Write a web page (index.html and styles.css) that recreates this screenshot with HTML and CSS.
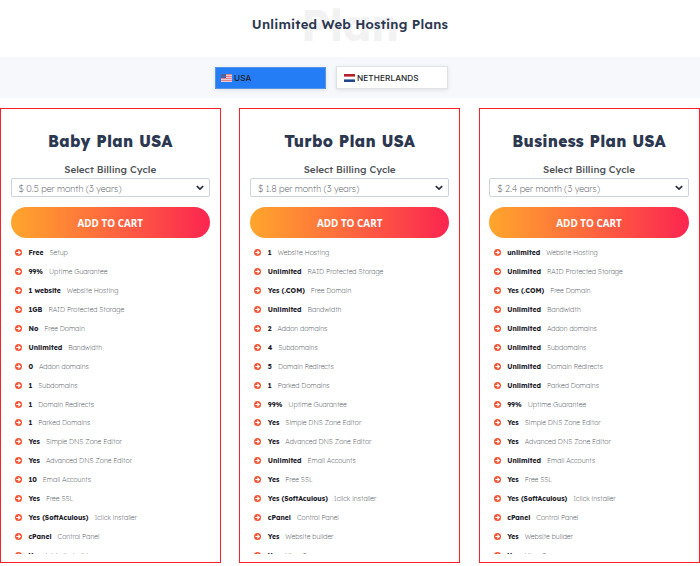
FILE: index.html
```html
<!DOCTYPE html>
<html lang="en">

<head>
  <title>Unlimited Web Hosting Plans</title>
  <meta charset="UTF-8">
  <link rel="stylesheet" href="styles.css">
</head>

<body>
  <header class="heading">
    <span class="heading-shadow">Plan</span>
    <h1>Unlimited Web Hosting Plans</h1>
  </header>

  <nav class="locations">
    <a class="location active">
      <svg class="flag" viewBox="0 0 11 8">
        <rect width="11" height="8" fill="#e9cbd8"/>
        <path d="M0 .5h11M0 2.5h11M0 4.5h11M0 6.5h11" stroke="#e27f8c"/>
        <rect width="5" height="4" fill="#55619b"/>
      </svg>
      <span>USA</span>
    </a>
    <a class="location">
      <svg class="flag" viewBox="0 0 11 8">
        <rect width="11" height="8" fill="#fff"/>
        <rect width="11" height="2.6" fill="#b51f2e"/>
        <rect y="5.4" width="11" height="2.6" fill="#21468b"/>
      </svg>
      <span>NETHERLANDS</span>
    </a>
  </nav>

  <main class="plans" id="plans"></main>

  <script src="plans.js"></script>
</body>

</html>
```
FILE: styles.css
```css
* {
  box-sizing: border-box;
  margin: 0;
  padding: 0;
}

body {
  width: 700px;
  height: 566px;
  overflow: hidden;
  background: #fff;
  font-family: Lexend, Inter, sans-serif;
  color: #2c3850;
}

.heading {
  position: relative;
  height: 57px;
  padding-top: 15px;
  text-align: center;
}

.heading h1 {
  position: relative;
  font-size: 13.1px;
  line-height: 18px;
  font-weight: 600;
  letter-spacing: 0.22px;
}

.heading-shadow {
  position: absolute;
  top: 0;
  left: 0;
  width: 100%;
  font-size: 43.5px;
  line-height: 50px;
  font-weight: 700;
  color: #f2f2f3;
}

.locations {
  display: flex;
  gap: 10px;
  height: 41px;
  padding: 9px 0 0 215px;
  background: #f7f8fb;
}

.location {
  display: flex;
  align-items: center;
  gap: 2px;
  width: 112px;
  height: 23px;
  padding: 1px 0 0 7px;
  background: #fff;
  border: 1px solid #dfe3e8;
  box-shadow: 0 1px 4px rgba(0, 0, 0, 0.1);
  font-family: Inter, sans-serif;
  font-size: 8.2px;
  font-weight: 500;
  letter-spacing: 0.1px;
  color: #1b1e24;
}

.location.active {
  width: 111px;
  margin-top: 1px;
  height: 22px;
  padding: 0 0 0 5px;
  background: #247df5;
  border-color: #5596e6;
}

.flag {
  width: 11px;
  height: 8px;
}

.plans {
  display: grid;
  grid-template-columns: repeat(3, 221px);
  column-gap: 18.4px;
  margin-top: 10px;
}

.plan {
  height: 455px;
  padding: 22px 10px 9px 9.5px;
  border: 1px solid #fb1f26;
  text-align: center;
}

.plan h2 {
  font-size: 15.6px;
  line-height: 20px;
  font-weight: 800;
  letter-spacing: 0.28px;
}

.plan h3 {
  margin-top: 11px;
  font-size: 9.9px;
  line-height: 14px;
  font-weight: 500;
  color: #505459;
}

.cycle {
  display: flex;
  align-items: center;
  justify-content: space-between;
  height: 19px;
  margin-top: 2px;
  padding: 1px 5px 0 7px;
  border: 1px solid #cdd4dc;
  border-radius: 2px;
  font-size: 8.9px;
  font-weight: 200;
  color: #5c626b;
}

.cycle svg {
  width: 8px;
  height: 6px;
}

.cart {
  display: block;
  width: 100%;
  height: 31px;
  margin-top: 10px;
  border: 0;
  border-radius: 16px;
  background: linear-gradient(90deg, #ffa62c, #fe6a3e 48%, #fb2550);
  font-family: "Open Sans", sans-serif;
  font-size: 9.9px;
  font-weight: 700;
  color: #fff;
}

.features {
  height: 316px;
  padding-top: 5.5px;
  overflow: hidden;
  list-style: none;
  text-align: left;
}

.features li {
  display: flex;
  align-items: center;
  height: 18.9px;
  padding-left: 4.5px;
  font-size: 6.85px;
  white-space: nowrap;
}

.features svg {
  flex: none;
  width: 7px;
  height: 7px;
  margin-right: 6.4px;
}

.features b {
  margin-right: 6px;
  font-weight: 700;
  color: #1b2029;
}

.features span {
  font-weight: 200;
  color: #565b63;
}
```
FILE: plans.js
```js
const plans = [
  {
    name: 'Baby Plan USA', price: '0.5', features: [
      ['Free', 'Setup'], ['99%', 'Uptime Guarantee'], ['1 website', 'Website Hosting'],
      ['1GB', 'RAID Protected Storage'], ['No', 'Free Domain'], ['Unlimited', 'Bandwidth'],
      ['0', 'Addon domains'], ['1', 'Subdomains'], ['1', 'Domain Redirects'],
      ['1', 'Parked Domains'], ['Yes', 'Simple DNS Zone Editor'], ['Yes', 'Advanced DNS Zone Editor'],
      ['10', 'Email Accounts'], ['Yes', 'Free SSL'], ['Yes (SoftAculous)', '1click installer'],
      ['cPanel', 'Control Panel'], ['Yes', 'Website builder']
    ]
  },
  {
    name: 'Turbo Plan USA', price: '1.8', features: [
      ['1', 'Website Hosting'], ['Unlimited', 'RAID Protected Storage'], ['Yes (.COM)', 'Free Domain'],
      ['Unlimited', 'Bandwidth'], ['2', 'Addon domains'], ['4', 'Subdomains'],
      ['5', 'Domain Redirects'], ['1', 'Parked Domains'], ['99%', 'Uptime Guarantee'],
      ['Yes', 'Simple DNS Zone Editor'], ['Yes', 'Advanced DNS Zone Editor'], ['Unlimited', 'Email Accounts'],
      ['Yes', 'Free SSL'], ['Yes (SoftAculous)', '1click installer'], ['cPanel', 'Control Panel'],
      ['Yes', 'Website builder'], ['Yes', 'Virus Scanner']
    ]
  },
  {
    name: 'Business Plan USA', price: '2.4', features: [
      ['unlimited', 'Website Hosting'], ['Unlimited', 'RAID Protected Storage'], ['Yes (.COM)', 'Free Domain'],
      ['Unlimited', 'Bandwidth'], ['Unlimited', 'Addon domains'], ['Unlimited', 'Subdomains'],
      ['Unlimited', 'Domain Redirects'], ['Unlimited', 'Parked Domains'], ['99%', 'Uptime Guarantee'],
      ['Yes', 'Simple DNS Zone Editor'], ['Yes', 'Advanced DNS Zone Editor'], ['Unlimited', 'Email Accounts'],
      ['Yes', 'Free SSL'], ['Yes (SoftAculous)', '1click installer'], ['cPanel', 'Control Panel'],
      ['Yes', 'Website builder'], ['Yes', 'Virus Scanner']
    ]
  }
]

const arrow = '<svg viewBox="0 0 14 14"><circle cx="7" cy="7" r="7" fill="#f9512f"/><path d="M2.6 7h7.4M6.6 3.2L10.4 7L6.6 10.8" fill="none" stroke="#fff" stroke-width="2.3"/></svg>'
const chevron = '<svg viewBox="0 0 8 6"><path d="M.8 1.2L4 4.2L7.2 1.2" fill="none" stroke="#2b303a" stroke-width="1.7"/></svg>'

document.getElementById('plans').innerHTML = plans.map(plan => `
  <section class="plan">
    <h2>${plan.name}</h2>
    <h3>Select Billing Cycle</h3>
    <div class="cycle"><span>$ ${plan.price} per month (3 years)</span>${chevron}</div>
    <button class="cart">ADD TO CART</button>
    <ul class="features">
      ${plan.features.map(([value, label]) => `<li>${arrow}<b>${value}</b><span>${label}</span></li>`).join('')}
    </ul>
  </section>`).join('')
```
